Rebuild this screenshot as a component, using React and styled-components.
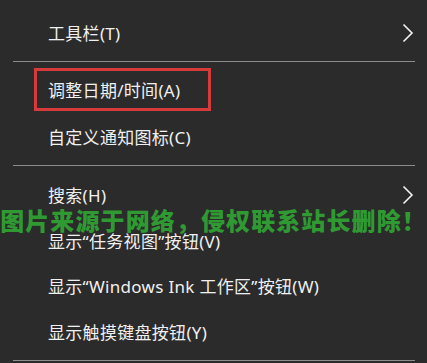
import React from "react";
import styled, { createGlobalStyle } from "styled-components";

const GlobalStyle = createGlobalStyle`
  html, body {
    margin: 0;
    padding: 0;
    background: #2b2b2b;
  }
  body {
    font-family: "Noto Sans", "Noto Sans CJK SC", sans-serif;
  }
`;

const items = [
  { label: "工具栏(T)", submenu: true },
  { divider: true },
  { label: "调整日期/时间(A)", marked: true },
  { label: "自定义通知图标(C)" },
  { divider: true },
  { label: "搜索(H)", submenu: true },
  { label: "显示“任务视图”按钮(V)" },
  { label: "显示“Windows Ink 工作区”按钮(W)" },
  { label: "显示触摸键盘按钮(Y)" },
  { divider: true },
];

const Chevron = () => (
  <svg width="12" height="20" viewBox="0 0 12 20" fill="none">
    <path d="M1.5 1.5 L10 10 L1.5 18.5" stroke="#f2f2f2" strokeWidth="1.6" />
  </svg>
);

const App = () => {
  const rows = items.map((item, i) =>
    item.divider ? (
      <StyledDivider key={i} />
    ) : (
      <StyledItem key={i}>
        <StyledLabel marked={item.marked ? 1 : 0}>{item.label}</StyledLabel>
        {item.submenu && <Chevron />}
      </StyledItem>
    )
  );
  return (
    <>
      <GlobalStyle />
      <StyledMenu>
        {rows}
        <StyledWatermark>图片来源于网络，侵权联系站长删除！</StyledWatermark>
      </StyledMenu>
    </>
  );
};

export default App;

export const StyledMenu = styled.div`
  position: relative;
  width: 427px;
  height: 363px;
  overflow: hidden;
  background: #2b2b2b;
  padding-top: 10px;
  box-sizing: border-box;
`;

export const StyledItem = styled.div`
  display: flex;
  align-items: center;
  justify-content: space-between;
  height: 45.4px;
  padding: 0 13px 0 48px;
  svg {
    margin-top: 1px;
  }
`;

export const StyledLabel = styled.span`
  font-size: 17px;
  color: #f0f0f0;
  letter-spacing: 0.3px;
  white-space: nowrap;
  ${(props) =>
    props.marked &&
    `
    margin-left: -14px;
    margin-top: -4px;
    padding: 6px 28px 6px 11px;
    border: 3px solid #d63a3a;
  `}
`;

export const StyledDivider = styled.div`
  height: 13px;
  display: flex;
  align-items: center;
  padding: 0 12px 0 13px;
  &::before {
    content: "";
    flex: 1;
    height: 1px;
    background: #8c8c8c;
  }
`;

export const StyledWatermark = styled.div`
  position: absolute;
  left: 0;
  top: 202px;
  width: 427px;
  text-align: center;
  font-family: "Noto Sans CJK SC", sans-serif;
  font-weight: 900;
  font-size: 24px;
  letter-spacing: 1.1px;
  color: #2f9a32;
  white-space: nowrap;
  pointer-events: none;
`;
